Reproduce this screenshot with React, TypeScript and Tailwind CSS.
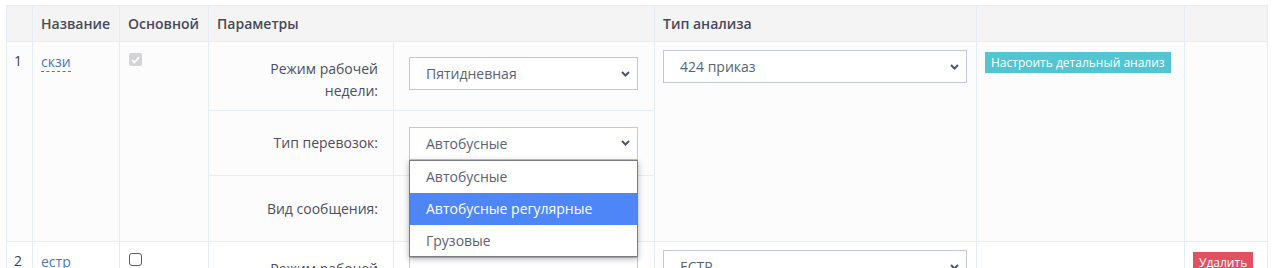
const font = { fontFamily: '"Open Sans", "Noto Sans", sans-serif' };

function Chevron() {
  return (
    <svg width="9" height="6" viewBox="0 0 9 6" className="shrink-0">
      <path d="M1 1l3.5 3.5L8 1" fill="none" stroke="#4b5570" strokeWidth="2" />
    </svg>
  );
}

function FakeSelect({ value }: { value: string }) {
  return (
    <div className="flex h-[33px] w-full items-center justify-between border border-[#c3c8d2] bg-white pl-[16px] pr-[7px] text-[14px] text-[#5a6275]">
      <span>{value}</span>
      <Chevron />
    </div>
  );
}

function Link({ children }: { children: string }) {
  return (
    <span className="border-b border-dashed border-[#4a76c4] text-[14px] leading-[19px] text-[#4a76c4]">
      {children}
    </span>
  );
}

const cell = "border border-[#e6ecf4] align-top";
const labelCell =
  "border border-[#e6ecf4] pr-[15px] text-right align-middle text-[14px] leading-[22px] text-[#4a4f63]";
const selectCell = "border border-[#e6ecf4] pl-[15px] pr-[16px] align-middle";
const headCell = "border border-[#e6ecf4] pl-[8px] align-middle font-semibold text-[#464a5c]";

export default function App() {
  return (
    <div className="h-[268px] w-[1273px] overflow-hidden bg-white pl-[6px] pt-[5px]" style={font}>
      <table className="w-[1261px] table-fixed border-collapse text-[14px] text-[#3d4152]">
        <colgroup>
          <col className="w-[26px]" />
          <col className="w-[87px]" />
          <col className="w-[89px]" />
          <col className="w-[185px]" />
          <col className="w-[261px]" />
          <col className="w-[322px]" />
          <col className="w-[208px]" />
          <col className="w-[83px]" />
        </colgroup>
        <thead>
          <tr className="h-[36px] bg-[#f4f4f5] text-left">
            <th className={cell}></th>
            <th className={headCell}>Название</th>
            <th className={headCell}>Основной</th>
            <th colSpan={2} className={headCell}>
              Параметры
            </th>
            <th className={headCell}>Тип анализа</th>
            <th className={cell}></th>
            <th className={cell}></th>
          </tr>
        </thead>
        <tbody>
          <tr className="h-[69px] bg-[#fcfcfc]">
            <td rowSpan={3} className={`${cell} pl-[7px] pt-[9px] leading-[19px]`}>
              1
            </td>
            <td rowSpan={3} className={`${cell} pl-[8px] pt-[9px]`}>
              <Link>скзи</Link>
            </td>
            <td rowSpan={3} className={`${cell} pl-[9px] pt-[11px]`}>
              <div className="flex h-[13px] w-[13px] items-center justify-center rounded-[2px] bg-[#d4d4d6]">
                <svg width="9" height="8" viewBox="0 0 9 8">
                  <path d="M1 4.2l2.4 2.3L8 1.2" fill="none" stroke="#fff" strokeWidth="1.8" />
                </svg>
              </div>
            </td>
            <td className={`${labelCell} pt-[7px]`}>
              Режим рабочей
              <br />
              недели:
            </td>
            <td className={`${selectCell} !align-top pt-[15px]`}>
              <FakeSelect value="Пятидневная" />
            </td>
            <td rowSpan={3} className={`${cell} pl-[8px] pr-[9px] pt-[8px]`}>
              <FakeSelect value="424 приказ" />
            </td>
            <td rowSpan={3} className={`${cell} pl-[8px] pt-[9px]`}>
              <span className="inline-block h-[21px] bg-[#52c5d3] px-[6px] text-[12px] leading-[21px] text-white">
                Настроить детальный анализ
              </span>
            </td>
            <td rowSpan={3} className={cell}></td>
          </tr>
          <tr className="h-[65px] bg-[#fcfcfc]">
            <td className={labelCell}>Тип перевозок:</td>
            <td className={selectCell}>
              <div className="relative">
                <FakeSelect value="Автобусные" />
                <div className="absolute left-0 top-[33px] z-10 w-full border border-[#7a7c82] bg-white text-[14px] text-[#5a6275] shadow-[0_2px_6px_rgba(0,0,0,0.3)]">
                  <div className="flex h-[32px] items-center pl-[16px]">Автобусные</div>
                  <div className="flex h-[32px] items-center bg-[#4f86f7] pl-[16px] text-white">
                    Автобусные регулярные
                  </div>
                  <div className="flex h-[31px] items-center pl-[16px]">Грузовые</div>
                </div>
              </div>
            </td>
          </tr>
          <tr className="h-[66px] bg-[#fcfcfc]">
            <td className={labelCell}>Вид сообщения:</td>
            <td className={selectCell}></td>
          </tr>
          <tr className="h-[69px] bg-white">
            <td className={`${cell} pl-[7px] pt-[9px] leading-[19px]`}>2</td>
            <td className={`${cell} pl-[8px] pt-[9px]`}>
              <span className="text-[14px] leading-[19px] text-[#4a76c4]">естр</span>
            </td>
            <td className={`${cell} pl-[9px] pt-[11px]`}>
              <div className="h-[13px] w-[13px] rounded-[3px] border border-[#5a5a5a] bg-white"></div>
            </td>
            <td className={`${labelCell} pt-[7px]`}>
              Режим рабочей
              <br />
              недели:
            </td>
            <td className={`${selectCell} !align-top pt-[15px]`}>
              <FakeSelect value="Пятидневная" />
            </td>
            <td className={`${cell} pl-[8px] pr-[9px] pt-[8px]`}>
              <FakeSelect value="ЕСТР" />
            </td>
            <td className={cell}></td>
            <td className={`${cell} pl-[8px] pt-[9px]`}>
              <span className="inline-block h-[21px] bg-[#e0525f] px-[6px] text-[12px] leading-[21px] text-white">
                Удалить
              </span>
            </td>
          </tr>
        </tbody>
      </table>
    </div>
  );
}
